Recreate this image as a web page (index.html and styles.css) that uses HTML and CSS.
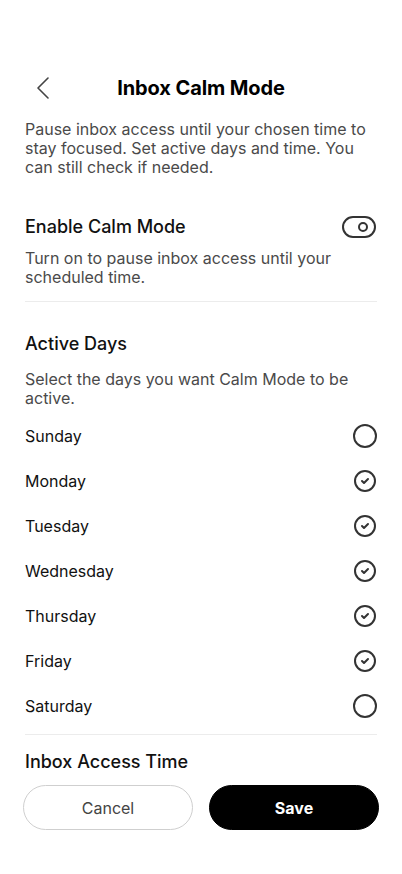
FILE: index.html
```html
<!DOCTYPE html>
<html lang="en">
<head>
<meta charset="utf-8">
<title>Inbox Calm Mode</title>
<link rel="stylesheet" href="styles.css">
</head>
<body>
<div class="screen">
  <main class="content">
    <header class="topbar">
      <button class="back" aria-label="Back">
        <svg width="14" height="22" viewBox="0 0 14 22" fill="none" stroke="#444" stroke-width="1.6" stroke-linecap="round" stroke-linejoin="round"><polyline points="12,1 2,11 12,21"/></svg>
      </button>
      <h1 class="title">Inbox Calm Mode</h1>
      <span class="spacer"></span>
    </header>

    <p class="intro">Pause inbox access until your chosen time to stay focused. Set active days and time. You can still check if needed.</p>

    <section class="enable">
      <div class="row-head">
        <h2 class="section-title">Enable Calm Mode</h2>
        <svg class="toggle" width="34" height="22" viewBox="0 0 34 22" fill="none" stroke="#333" stroke-width="2"><rect x="1" y="1" width="32" height="20" rx="10"/><circle cx="21" cy="11" r="4"/></svg>
      </div>
      <p class="help">Turn on to pause inbox access until your scheduled time.</p>
    </section>

    <hr class="divider">

    <section class="days">
      <h2 class="section-title">Active Days</h2>
      <p class="help help-days">Select the days you want Calm Mode to be active.</p>
      <ul class="day-list">
        <li class="day"><span>Sunday</span><span class="radio"></span></li>
        <li class="day"><span>Monday</span><svg class="check" width="24" height="24" viewBox="0 0 24 24" fill="none" stroke="#333" stroke-width="2" stroke-linecap="round" stroke-linejoin="round"><circle cx="12" cy="12" r="10"/><path d="m9 12 2 2 4-4"/></svg></li>
        <li class="day"><span>Tuesday</span><svg class="check" width="24" height="24" viewBox="0 0 24 24" fill="none" stroke="#333" stroke-width="2" stroke-linecap="round" stroke-linejoin="round"><circle cx="12" cy="12" r="10"/><path d="m9 12 2 2 4-4"/></svg></li>
        <li class="day"><span>Wednesday</span><svg class="check" width="24" height="24" viewBox="0 0 24 24" fill="none" stroke="#333" stroke-width="2" stroke-linecap="round" stroke-linejoin="round"><circle cx="12" cy="12" r="10"/><path d="m9 12 2 2 4-4"/></svg></li>
        <li class="day"><span>Thursday</span><svg class="check" width="24" height="24" viewBox="0 0 24 24" fill="none" stroke="#333" stroke-width="2" stroke-linecap="round" stroke-linejoin="round"><circle cx="12" cy="12" r="10"/><path d="m9 12 2 2 4-4"/></svg></li>
        <li class="day"><span>Friday</span><svg class="check" width="24" height="24" viewBox="0 0 24 24" fill="none" stroke="#333" stroke-width="2" stroke-linecap="round" stroke-linejoin="round"><circle cx="12" cy="12" r="10"/><path d="m9 12 2 2 4-4"/></svg></li>
        <li class="day"><span>Saturday</span><span class="radio"></span></li>
      </ul>
    </section>

    <hr class="divider divider-bottom">

    <section class="access">
      <h2 class="section-title">Inbox Access Time</h2>
    </section>
  </main>

  <footer class="actions">
    <button class="btn btn-cancel">Cancel</button>
    <button class="btn btn-save">Save</button>
  </footer>
</div>
</body>
</html>
```

FILE: styles.css
```css
* {
  box-sizing: border-box;
}

html, body {
  margin: 0;
  padding: 0;
  background: #ffffff;
}

body {
  font-family: Inter, "Noto Sans", "Liberation Sans", sans-serif;
  color: #111111;
}

.screen {
  width: 402px;
  height: 874px;
  display: flex;
  flex-direction: column;
  overflow: hidden;
}

.content {
  flex: 1;
  min-height: 0;
  overflow: hidden;
  padding: 66px 25px 0 25px;
}

.topbar {
  height: 44px;
  display: grid;
  grid-template-columns: 1fr auto 1fr;
  align-items: center;
}

.back {
  justify-self: start;
  background: none;
  border: 0;
  padding: 0;
  margin-left: 11px;
  display: flex;
  align-items: center;
  cursor: pointer;
}

.title {
  margin: 0;
  font-size: 20px;
  font-weight: 700;
  letter-spacing: -0.1px;
  color: #000;
}

.intro {
  margin: 10px 0 0 0;
  font-size: 16px;
  line-height: 19px;
  color: #4a4a4a;
}

.enable {
  margin-top: 38px;
}

.row-head {
  display: flex;
  align-items: center;
  justify-content: space-between;
  height: 24px;
}

.toggle {
  display: block;
  margin-right: 1px;
}

.section-title {
  margin: 0;
  font-size: 18px;
  line-height: 22px;
  font-weight: 500;
  color: #111;
}

.help {
  margin: 10px 0 0 0;
  font-size: 16px;
  line-height: 19px;
  color: #4a4a4a;
}

.divider {
  border: 0;
  height: 1px;
  background: #ececec;
  margin: 14px 0 0 0;
}

.days {
  margin-top: 31px;
}

.help-days {
  margin-top: 15px;
}

.day-list {
  list-style: none;
  margin: 5px 0 0 0;
  padding: 0;
}

.day {
  height: 45px;
  display: flex;
  align-items: center;
  justify-content: space-between;
  font-size: 16px;
  color: #111;
}

.radio {
  width: 24px;
  height: 24px;
  border: 2px solid #333;
  border-radius: 50%;
  margin-right: 0;
}

.check {
  display: block;
  margin-right: 0;
}

.divider-bottom {
  margin-top: 6px;
}

.access {
  margin-top: 16px;
}

.actions {
  flex: none;
  background: #fff;
  display: flex;
  gap: 16px;
  padding: 10px 23px 44px 23px;
}

.btn {
  flex: 1;
  height: 45px;
  border-radius: 23px;
  font-family: Inter, "Noto Sans", "Liberation Sans", sans-serif;
  font-size: 16px;
  cursor: pointer;
}

.btn-cancel {
  background: #fff;
  border: 1px solid #cfcfcf;
  color: #444;
  font-weight: 400;
}

.btn-save {
  background: #000;
  border: 1px solid #000;
  color: #fff;
  font-weight: 700;
}
```
